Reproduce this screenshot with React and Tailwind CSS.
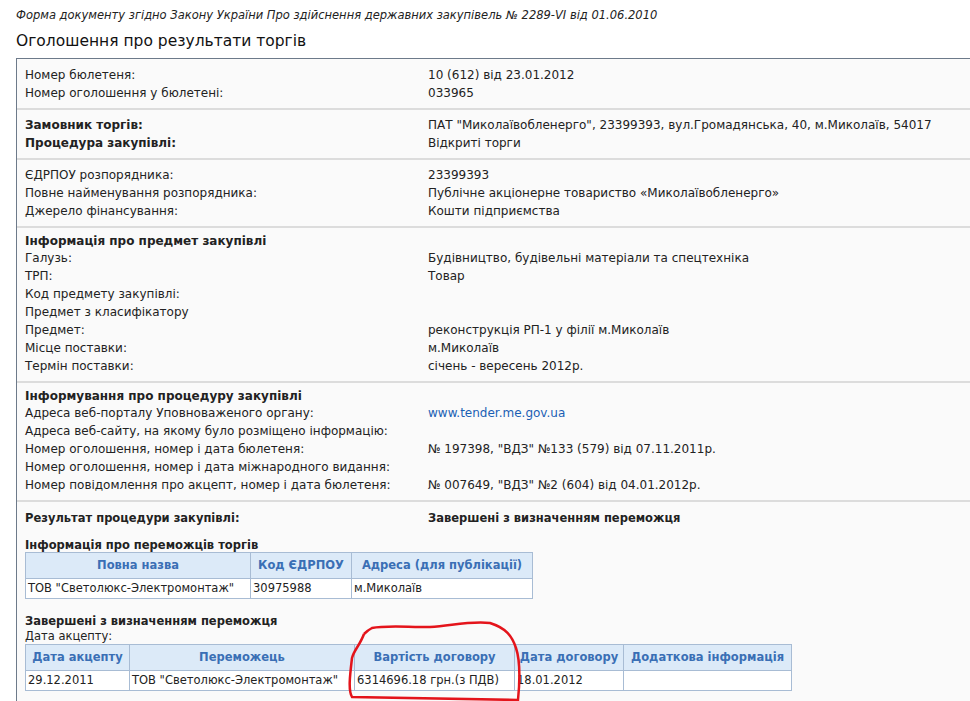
const F = { fontFamily: '"DejaVu Sans", Verdana, sans-serif' }

function Row({ l, r, bold, link }) {
  return (
    <div className="flex h-[18px] items-center">
      <div className={`w-[403px] shrink-0 ${bold ? 'font-bold' : ''}`}>{l}</div>
      <div className={`${bold === 'both' ? 'font-bold' : ''} ${link ? 'text-[#1a5fb4]' : ''}`}>{r}</div>
    </div>
  )
}

function Section({ children, title }) {
  return (
    <div className="px-[8px] py-[6px] border-b-2 border-[#dcdcdc]">
      {title && <div className="font-bold h-[15px] leading-[15px]">{title}</div>}
      {children}
    </div>
  )
}

const th = 'border border-[#a8bcd4] bg-[#dceaf8] text-[#3a6fb5] font-bold text-center h-[26px] px-[2px] whitespace-nowrap'
const td = 'border border-[#a8bcd4] bg-white h-[20px] px-[2px] whitespace-nowrap'

export default function App() {
  return (
    <div className="w-[970px] h-[701px] overflow-hidden bg-white text-[12px] text-[#222] relative" style={F}>
      <div className="pl-[16px] pt-[7px] italic text-[11.5px] h-[22px]">
        Форма документу згідно Закону України Про здійснення державних закупівель № 2289-VI від 01.06.2010
      </div>
      <div className="pl-[16px] pt-[8px] text-[15.5px] h-[36px] text-[#111]">Оголошення про результати торгів</div>
      <div className="ml-[16px] border border-[#6d7a8a] border-r-0 bg-[#fafafa] h-[700px]">
        <div className="px-[8px] pt-[7px] pb-[6px] border-b-2 border-[#dcdcdc]">
          <Row l="Номер бюлетеня:" r="10 (612) від 23.01.2012" />
          <Row l="Номер оголошення у бюлетені:" r="033965" />
        </div>
        <Section>
          <Row bold l="Замовник торгів:" r={'ПАТ "Миколаївобленерго", 23399393, вул.Громадянська, 40, м.Миколаїв, 54017'} />
          <Row bold l="Процедура закупівлі:" r="Відкриті торги" />
        </Section>
        <Section>
          <Row l="ЄДРПОУ розпорядника:" r="23399393" />
          <Row l="Повне найменування розпорядника:" r="Публічне акціонерне товариство «Миколаївобленерго»" />
          <Row l="Джерело фінансування:" r="Кошти підприємства" />
        </Section>
        <Section title="Інформація про предмет закупівлі">
          <Row l="Галузь:" r="Будівництво, будівельні матеріали та спецтехніка" />
          <Row l="ТРП:" r="Товар" />
          <Row l="Код предмету закупівлі:" r="" />
          <Row l="Предмет з класифікатору" r="" />
          <Row l="Предмет:" r="реконструкція РП-1 у філії м.Миколаїв" />
          <Row l="Місце поставки:" r="м.Миколаїв" />
          <Row l="Термін поставки:" r="січень - вересень 2012р." />
        </Section>
        <Section title="Інформування про процедуру закупівлі">
          <Row l="Адреса веб-порталу Уповноваженого органу:" r="www.tender.me.gov.ua" link />
          <Row l="Адреса веб-сайту, на якому було розміщено інформацію:" r="" />
          <Row l="Номер оголошення, номер і дата бюлетеня:" r={'№ 197398, "ВДЗ" №133 (579) від 07.11.2011р.'} />
          <Row l="Номер оголошення, номер і дата міжнародного видання:" r="" />
          <Row l="Номер повідомлення про акцепт, номер і дата бюлетеня:" r={'№ 007649, "ВДЗ" №2 (604) від 04.01.2012р.'} />
        </Section>
        <div className="px-[8px] pt-[8px] text-[11.5px]">
          <Row bold="both" l="Результат процедури закупівлі:" r="Завершені з визначенням переможця" />
          <div className="font-bold mt-[10px] h-[14px] leading-[14px]">Інформація про переможців торгів</div>
          <table className="border-collapse">
            <thead>
              <tr>
                <th className={`${th} w-[225px]`}>Повна назва</th>
                <th className={`${th} w-[101px]`}>Код ЄДРПОУ</th>
                <th className={`${th} w-[181px]`}>Адреса (для публікації)</th>
              </tr>
            </thead>
            <tbody>
              <tr>
                <td className={td}>ТОВ "Светолюкс-Электромонтаж"</td>
                <td className={td}>30975988</td>
                <td className={td}>м.Миколаїв</td>
              </tr>
            </tbody>
          </table>
          <div className="font-bold mt-[14px] h-[16px] leading-[16px]">Завершені з визначенням переможця</div>
          <div className="h-[15px] leading-[15px]">Дата акцепту:</div>
          <table className="border-collapse">
            <thead>
              <tr>
                <th className={`${th} w-[104px]`}>Дата акцепту</th>
                <th className={`${th} w-[225px]`}>Переможець</th>
                <th className={`${th} w-[160px]`}>Вартість договору</th>
                <th className={`${th} w-[109px]`}>Дата договору</th>
                <th className={`${th} w-[168px]`}>Додаткова інформація</th>
              </tr>
            </thead>
            <tbody>
              <tr>
                <td className={td}>29.12.2011</td>
                <td className={td}>ТОВ "Светолюкс-Электромонтаж"</td>
                <td className={td}>6314696.18 грн.(з ПДВ)</td>
                <td className={td}>18.01.2012</td>
                <td className={td}></td>
              </tr>
            </tbody>
          </table>
        </div>
      </div>
      <svg className="absolute left-0 top-0 pointer-events-none" width="970" height="701">
        <path
          d="M364 634 C360 645 354 650 352 658 C350 675 348 690 352 697 L518 700 C520 680 520 660 516 648 C512 636 506 628 490 623 C470 621 455 625 430 627 C405 627 385 625 372 628 C368 630 366 632 364 634"
          fill="none" stroke="#e4141b" strokeWidth="2.5"
        />
      </svg>
    </div>
  )
}
